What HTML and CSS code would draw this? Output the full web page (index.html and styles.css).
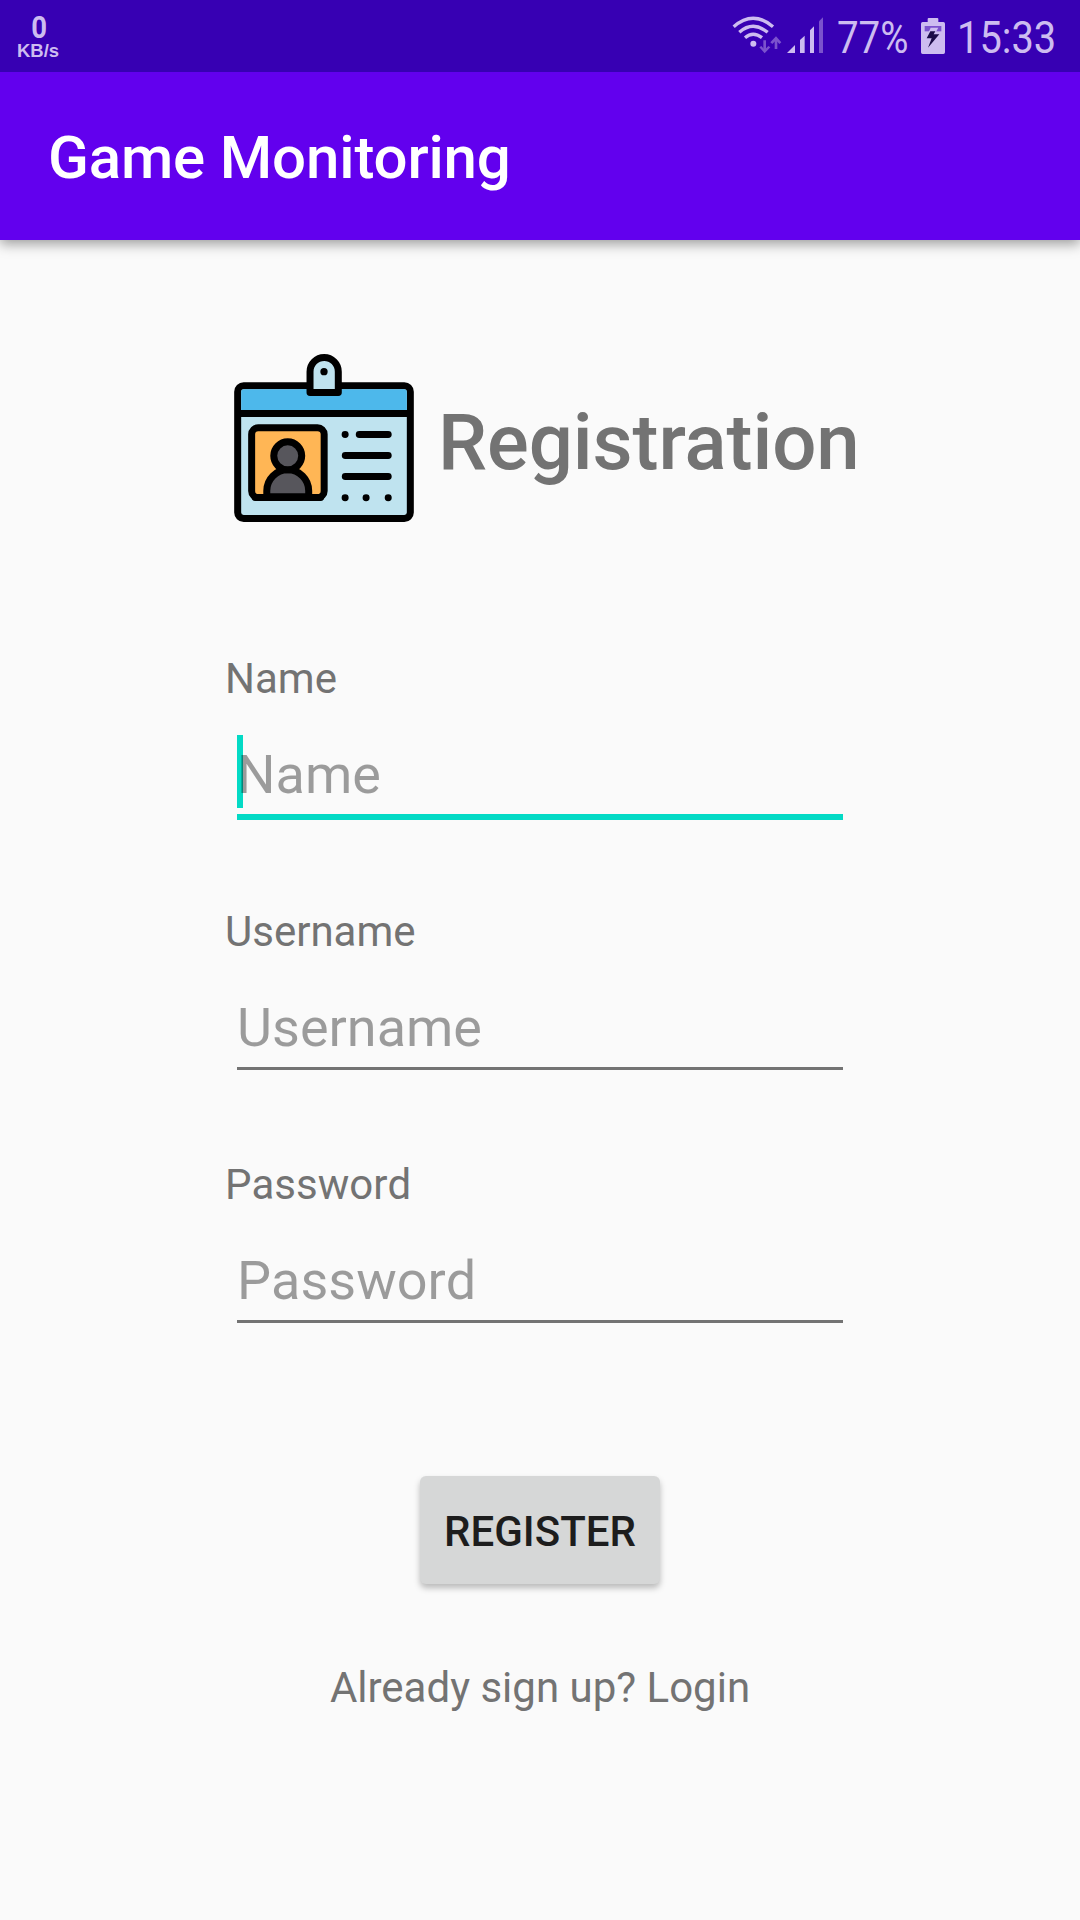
FILE: index.html
```html
<!DOCTYPE html>
<html lang="en">
<head>
<meta charset="utf-8">
<title>Game Monitoring</title>
<link rel="stylesheet" href="styles.css">
</head>
<body>
<div class="status-bar">
  <div class="net-speed">
    <span class="net-value">0</span>
    <span class="net-unit">KB/s</span>
  </div>
  <div class="status-icons">
    <svg class="wifi" viewBox="36 45 150 117" fill="none" stroke="#cdbcf0">
      <path d="M41 80Q99 29 159 80M58 97Q99 61 143 97M75 113Q99 92 126 113" stroke-width="10"/>
      <circle cx="100" cy="131" r="9" fill="#cdbcf0" stroke="none"/>
      <path d="M134 121V150M168 147V117" stroke="#7b52cd" stroke-width="8"/>
      <path d="M118 142L134 160L151 142L145 138L134 149L124 138ZM151 127L168 109L184 127L178 132L168 121L157 132Z" fill="#7b52cd" stroke="none"/>
    </svg>
    <svg class="signal" viewBox="201 48 111 114" fill="#cdbcf0">
      <path d="M201 159L225 135V159ZM240 159V120L254 107V159ZM270 159V91L282 79V159Z"/>
      <path d="M297 159V64L309 52V159Z" fill="#7b52cd"/>
    </svg>
    <span class="narrow percent">77%</span>
    <svg class="battery" viewBox="603 54 72 108">
      <path d="M608 66H623V57Q623 54 626 54H652Q655 54 655 57V66H670Q675 66 675 71V157Q675 162 670 162H608Q603 162 603 157V71Q603 66 608 66Z" fill="#cdbcf0"/>
      <path d="M614 78H664V94H614Z" fill="#7b52cd"/>
      <path d="M632 83H655L646 99H661L623 147L634 116H617Z" fill="#cdbcf0"/>
      <path d="M631 94H646L641 103H658L624 143L635 115H620Z" fill="#1b0b48"/>
    </svg>
    <span class="narrow clock">15:33</span>
  </div>
</div>
<header class="app-bar"><h1 class="app-title">Game Monitoring</h1></header>
<main class="content">
  <div class="heading">
    <svg class="badge-icon" viewBox="42 41 540 505" stroke="#000" stroke-width="21" stroke-linecap="round" stroke-linejoin="round">
      <rect x="52.500" y="136.500" width="519" height="399" rx="18" fill="#bfe3ef"/>
      <path d="M63 220V155Q63 147 71 147H553Q561 147 561 155V220Z" fill="#4db8eb" stroke="none"/>
      <path d="M60 220H564"/>
      <path d="M270 157V94A42.500 42.500 0 0 1 355 94V157Z" fill="#bfe3ef"/>
      <circle cx="312" cy="94" r="11" fill="#000" stroke="none"/>
      <rect x="94.500" y="262.500" width="218" height="210" rx="20" fill="#ffb655"/>
      <path d="M140 470V452A63 63 0 0 1 266 452V470Z" fill="#57565c"/>
      <circle cx="203" cy="347" r="42" fill="#57565c"/>
      <path d="M105 472H302M418 283H505M376 346H505M376 409H505M375.500 283H375.600M375.500 473H375.600M438.500 473H438.600M505 473H505.100" fill="none"/>
    </svg>
    <h2 class="heading-text">Registration</h2>
  </div>
  <form class="form">
    <div class="field">
      <span class="label">Name</span>
      <div class="input input-focused">Name</div>
    </div>
    <div class="field">
      <span class="label">Username</span>
      <div class="input">Username</div>
    </div>
    <div class="field">
      <span class="label">Password</span>
      <div class="input">Password</div>
    </div>
  </form>
  <button class="register" type="button">REGISTER</button>
  <p class="login">Already sign up? Login</p>
</main>
</body>
</html>
```

FILE: styles.css
```css
* { box-sizing: border-box; margin: 0; padding: 0; }

body {
  width: 1080px;
  height: 1920px;
  display: flex;
  flex-direction: column;
  background: #fafafa;
  color: #737373;
  font-family: Roboto, "Liberation Sans", sans-serif;
  overflow: hidden;
}

svg { display: block; flex: none; }

.status-bar {
  position: relative;
  z-index: 1;
  height: 72px;
  flex: none;
  display: flex;
  justify-content: space-between;
  padding: 0 26px 0 17px;
  background: #3700b3;
  color: #cdbcf0;
}

.net-speed {
  display: flex;
  flex-direction: column;
  align-items: center;
  padding-top: 12px;
}

.net-value { margin-left: 2px; font-size: 32px; line-height: 30px; font-weight: 700; transform: scaleX(0.86); }
.net-unit { font: 700 18.5px/17px "Liberation Sans", sans-serif; }

.status-icons { display: flex; }
.wifi { width: 50px; height: 39px; margin-top: 15px; }
.signal { width: 37px; height: 38px; margin: 16px 13px 0 5px; }
.battery { width: 24px; height: 36px; margin-top: 18px; }

.narrow {
  font-size: 45px;
  line-height: 52px;
  padding-top: 12px;
  white-space: nowrap;
  transform-origin: left;
}

.percent { width: 84px; transform: scaleX(0.855); }
.clock { width: 97px; margin-left: 12px; transform: scaleX(0.885); }

.app-bar {
  height: 168px;
  flex: none;
  display: flex;
  align-items: center;
  padding: 4px 48px 0;
  background: #6200ee;
  box-shadow: 0 4px 12px rgba(0, 0, 0, 0.38);
}

.app-title { color: #fff; font-size: 60px; line-height: 70px; font-weight: 500; letter-spacing: -0.15px; }

.content {
  display: flex;
  flex-direction: column;
  align-items: center;
  padding-top: 114px;
}

.heading { display: flex; width: 624px; height: 168px; margin-left: 12px; }
.badge-icon { width: 180px; height: 168px; }
.heading-text {
  margin: 43px 0 0 24px;
  font-size: 78px;
  line-height: 92px;
  font-weight: 500;
  letter-spacing: -0.1px;
}

.form {
  display: flex;
  flex-direction: column;
  gap: 87px;
  width: 630px;
  margin-top: 132px;
  font-kerning: none;
}

.field { height: 166px; }

.label {
  display: block;
  height: 50px;
  margin-bottom: 31px;
  font-size: 42px;
  line-height: 50px;
}

.input {
  height: 82px;
  margin: 0 12px;
  padding-top: 8px;
  border-bottom: 3px solid #737373;
  color: rgba(0, 0, 0, 0.38);
  font-size: 54px;
  line-height: 64px;
}

.input-focused {
  height: 85px;
  border-bottom: 6px solid #03dac5;
  background: linear-gradient(#03dac5, #03dac5) 0 0 / 6px 73px no-repeat;
}

.register {
  width: 240px;
  height: 108px;
  margin-top: 150px;
  border: 0;
  border-radius: 6px;
  background: #d6d7d7;
  box-shadow: 0 4px 6px rgba(0, 0, 0, 0.26);
  color: #1d1d1d;
  font: 500 42px/50px Roboto, sans-serif;
  padding-top: 3px;
}

.login { margin-top: 79px; font-size: 42px; line-height: 50px; }
```
